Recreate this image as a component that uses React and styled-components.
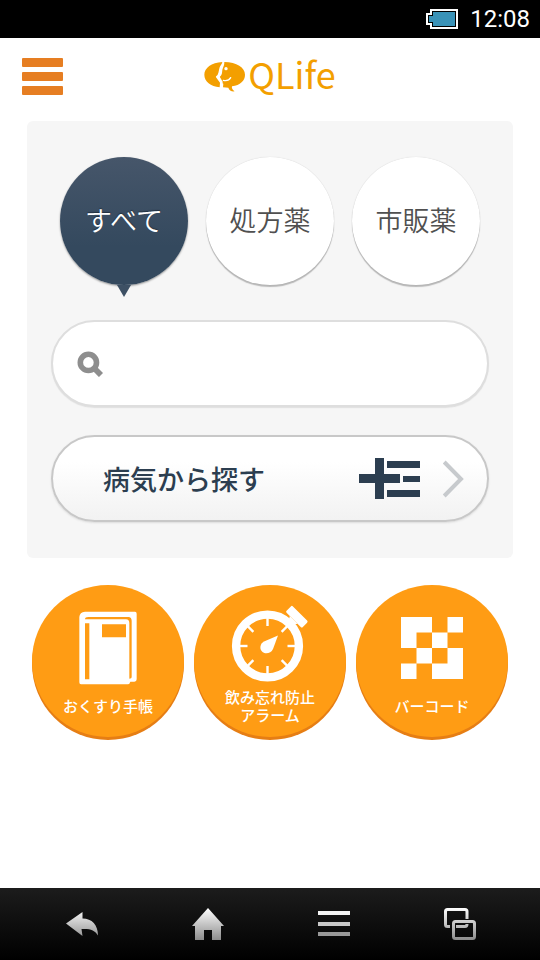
import { useState } from "react";
import styled, { createGlobalStyle } from "styled-components";

const GlobalStyle = createGlobalStyle`
  * {
    box-sizing: border-box;
  }
  body {
    margin: 0;
    background-color: #fff;
    font-family: "Noto Sans CJK JP", "Noto Sans", sans-serif;
  }
  button {
    padding: 0;
    border: 0;
    background: none;
    font-family: inherit;
    cursor: pointer;
  }
  svg {
    display: block;
    flex-shrink: 0;
  }
`;

const filters = ["すべて", "処方薬", "市販薬"];

export default function App() {
  const [filter, setFilter] = useState(filters[0]);
  const [keyword, setKeyword] = useState("");

  return (
    <Screen>
      <GlobalStyle />
      <StatusBar>
        <BatteryIcon />
        <time>12:08</time>
      </StatusBar>

      <Header>
        <MenuButton type="button" aria-label="メニュー">
          <MenuBar />
          <MenuBar />
          <MenuBar />
        </MenuButton>
        <Logo href="#">
          <LogoMark />
          <LogoText>QLife</LogoText>
        </Logo>
      </Header>

      <Main>
        <SearchPanel>
          <FilterRow>
            {filters.map((name) => (
              <FilterButton
                key={name}
                type="button"
                $active={name === filter}
                aria-pressed={name === filter}
                onClick={() => setFilter(name)}
              >
                {name}
              </FilterButton>
            ))}
          </FilterRow>
          <SearchBox>
            <SearchIcon />
            <SearchInput
              type="text"
              aria-label="薬を検索"
              value={keyword}
              onChange={(e) => setKeyword(e.target.value)}
            />
          </SearchBox>
          <DiseaseButton type="button">
            <DiseaseLabel>病気から探す</DiseaseLabel>
            <DiseaseIcon />
            <ChevronIcon />
          </DiseaseButton>
        </SearchPanel>

        <ToolRow>
          <ToolButton type="button">
            <ToolIcon>
              <NotebookIcon />
            </ToolIcon>
            <ToolLabel>おくすり手帳</ToolLabel>
          </ToolButton>
          <ToolButton type="button">
            <ToolIcon>
              <StopwatchIcon />
            </ToolIcon>
            <ToolLabel>
              飲み忘れ防止
              <br />
              アラーム
            </ToolLabel>
          </ToolButton>
          <ToolButton type="button">
            <ToolIcon>
              <BarcodeIcon />
            </ToolIcon>
            <ToolLabel>バーコード</ToolLabel>
          </ToolButton>
        </ToolRow>
      </Main>

      <SystemNav>
        <SystemButton type="button" aria-label="戻る">
          <BackIcon />
        </SystemButton>
        <SystemButton type="button" aria-label="ホーム">
          <HomeIcon />
        </SystemButton>
        <SystemButton type="button" aria-label="オプション">
          <OptionsIcon />
        </SystemButton>
        <SystemButton type="button" aria-label="最近使ったアプリ">
          <RecentsIcon />
        </SystemButton>
      </SystemNav>
    </Screen>
  );
}

function BatteryIcon() {
  return (
    <svg width="32" height="20" viewBox="0 0 32 20">
      <path d="M4 0H32V20H4V16H0V4H4Z" fill="#fff" />
      <path d="M6 2H30V18H6V14H2V6H6Z" fill="#000" />
      <path d="M7 3H29V17H7V13H3V7H7Z" fill="#3a93b8" />
    </svg>
  );
}

function LogoMark() {
  return (
    <svg width="42" height="31" viewBox="0 0 126 93">
      <path
        d="M55 3C22 5 1 21 1 41C1 61 20 76 47 79L48 65L36 49C34 46 39 44 41 41C45 34 44 27 47 19C49 13 54 9 55 3Z"
        fill="#f39f00"
      />
      <path
        d="M61 3C98 4 123 19 123 41C123 59 109 72 84 76C82 81 86 87 92 91C82 92 75 88 73 80L57 79L58 68C55 67 56 65 56 62L48 49C47 46 50 45 52 42C56 34 53 28 57 20C60 14 61 10 61 3Z"
        fill="#f39f00"
      />
      <circle cx="66" cy="23" r="5" fill="#fff" />
      <path
        d="M58 58C67 60 76 57 80 50"
        fill="none"
        stroke="#fff"
        strokeWidth="4"
        strokeLinecap="round"
      />
    </svg>
  );
}

function SearchIcon() {
  return (
    <svg width="26" height="26" viewBox="0 0 26 26" fill="none" stroke="#8e8e8e">
      <circle cx="11.4" cy="11.4" r="8.1" strokeWidth="5.6" />
      <path d="M16.500 16.500L24 24" strokeWidth="5.8" />
    </svg>
  );
}

function DiseaseIcon() {
  return (
    <svg width="62" height="42" viewBox="0 0 62 42" fill="#2c3e50">
      <path d="M16 0H25V16H41V25H25V41H16V25H0V16H16Z" />
      <path d="M28 3H61V10H28ZM44 18H61V24H44ZM28 32H61V39H28Z" />
    </svg>
  );
}

function ChevronIcon() {
  return (
    <svg width="22" height="38" viewBox="0 0 22 38">
      <path d="M1.200 2L18 19L1.200 36" fill="none" stroke="#c7cacd" strokeWidth="4" />
    </svg>
  );
}

function NotebookIcon() {
  return (
    <svg width="58" height="74" viewBox="0 0 174 222">
      <path
        d="M18 2H168Q173 2 173 8V205Q173 212 166 212H154Q152 220 146 220H6Q1 220 1 214V18Q2 3 18 2Z"
        fill="#fff"
      />
      <path
        d="M18 25Q18 18 28 18H148Q158 19 158 29V199Q158 203 151 203V36Q151 26 141 25Z"
        fill="#ff9c14"
      />
      <path d="M18 37H31V205H18ZM69 40H141V79H69Z" fill="#ff9c14" />
    </svg>
  );
}

function StopwatchIcon() {
  const ticks = [0, 45, 90, 135, 180, 225, 270, 315];
  return (
    <svg width="78" height="86" viewBox="0 0 78 86">
      <circle cx="36.5" cy="41" r="31.4" fill="none" stroke="#fff" strokeWidth="8.4" />
      {ticks.map((angle) => (
        <path
          key={angle}
          d="M36.500 13V21"
          stroke="#fff"
          strokeWidth="2.4"
          transform={`rotate(${angle} 36.500 41)`}
        />
      ))}
      <path
        d="M47 30.500L42 44C40 48.500 34.500 49.500 31.500 47C28 44 29 38.500 33 36.500Z"
        fill="#fff"
      />
      <g transform="rotate(45 36.5 41)">
        <path d="M31 4H42L40 7V10H33V7Z" fill="#fff" />
        <rect x="25" y="-5" width="23" height="9" rx="1.5" fill="#fff" />
      </g>
    </svg>
  );
}

function BarcodeIcon() {
  return (
    <svg width="62" height="62" viewBox="0 0 4 4" fill="#fff">
      <path d="M0 0H2V1H1V2H0ZM3 0H4V1H3ZM2 1H3V2H2ZM1 2H2V3H1ZM3 2H4V4H2V3H3ZM0 3H1V4H0Z" />
    </svg>
  );
}

function MetalGradient({ id }) {
  return (
    <linearGradient id={id} x1="0" y1="0" x2="0" y2="32" gradientUnits="userSpaceOnUse">
      <stop offset="0" stopColor="#fff" />
      <stop offset="1" stopColor="#8c8c8c" />
    </linearGradient>
  );
}

function BackIcon() {
  return (
    <svg width="32" height="32" viewBox="0 0 32 32">
      <MetalGradient id="metal-back" />
      <path
        d="M0 15.500L16.500 4V10.500C26 10.500 32 17 32 27.500C29 22 24 20.500 15.500 21L16.500 28Z"
        fill="url(#metal-back)"
      />
    </svg>
  );
}

function HomeIcon() {
  return (
    <svg width="32" height="32" viewBox="0 0 32 32">
      <MetalGradient id="metal-home" />
      <path
        d="M16 0L32 18H29V32H20V22H12V32H3V18H0Z"
        fill="url(#metal-home)"
      />
    </svg>
  );
}

function OptionsIcon() {
  return (
    <svg width="32" height="32" viewBox="0 0 32 32">
      <path d="M0 3H32V7H0Z" fill="#f4f4f4" />
      <path d="M0 14H32V18H0Z" fill="#c8c8c8" />
      <path d="M0 24H32V28H0Z" fill="#989898" />
    </svg>
  );
}

function RecentsIcon() {
  return (
    <svg width="32" height="32" viewBox="0 0 32 32" fill="none" strokeWidth="3">
      <MetalGradient id="metal-recents" />
      <path
        d="M6 18.500H3.500Q1.500 18.500 1.500 16.500V3.500Q1.500 1.500 3.500 1.500H21Q23 1.500 23 3.500V11M12 18.500H21Q23 18.500 23 16"
        stroke="url(#metal-recents)"
      />
      <rect x="9.500" y="13.500" width="21" height="17" rx="2" stroke="url(#metal-recents)" />
    </svg>
  );
}

const Screen = styled.div`
  display: flex;
  flex-direction: column;
  min-height: 100vh;
`;

const StatusBar = styled.div`
  display: flex;
  align-items: center;
  justify-content: flex-end;
  gap: 12px;
  height: 38px;
  padding: 0 10px;
  background-color: #000;
  color: #fff;
  font-family: Roboto, sans-serif;
  font-size: 24px;
  line-height: 38px;
`;

const Header = styled.header`
  display: grid;
  grid-template-columns: 1fr auto 1fr;
  align-items: center;
  height: 77px;
  padding: 0 22px;
`;

const MenuButton = styled.button`
  display: flex;
  flex-direction: column;
  gap: 5px;
  width: 41px;
`;

const MenuBar = styled.span`
  height: 9px;
  border-radius: 1px;
  background-color: #e67e22;
`;

const Logo = styled.a`
  display: flex;
  align-items: center;
  gap: 2px;
  color: #f39f00;
  text-decoration: none;
`;

const LogoText = styled.span`
  padding-bottom: 8px;
  font-size: 36px;
  line-height: 40px;
`;

const Main = styled.main`
  flex: 1;
  padding: 6px 27px 24px;
`;

const SearchPanel = styled.section`
  display: flex;
  flex-direction: column;
  padding: 36px 24px;
  border-radius: 6px;
  background-color: #f6f6f6;
`;

const FilterRow = styled.div`
  display: flex;
  justify-content: center;
  gap: 18px;
  margin-bottom: 35px;
`;

const FilterButton = styled.button`
  position: relative;
  width: 128px;
  height: 128px;
  padding-bottom: 2px;
  border-radius: 50%;
  background: ${({ $active }) =>
    $active ? "linear-gradient(#46566a, #34495e 70%)" : "#fff"};
  box-shadow: ${({ $active }) =>
    $active
      ? "0 1px 2px rgba(0, 0, 0, 0.4)"
      : "0 0 1px rgba(0, 0, 0, 0.2), 0 2px 1px rgba(0, 0, 0, 0.25)"};
  color: ${({ $active }) => ($active ? "#fff" : "#505050")};
  font-size: 27px;
  font-weight: 350;
  line-height: 40px;
  text-shadow: ${({ $active }) => ($active ? "0 -1px 1px #22303f" : "none")};

  &::after {
    content: "";
    display: ${({ $active }) => ($active ? "block" : "none")};
    position: absolute;
    top: 100%;
    left: 50%;
    border: 7px solid transparent;
    border-top: 12px solid #3d5064;
    border-bottom: 0;
    transform: translateX(-50%);
  }
`;

const SearchBox = styled.div`
  display: flex;
  align-items: center;
  gap: 12px;
  height: 87px;
  margin-bottom: 28px;
  padding: 0 24px;
  border: 2px solid #dedede;
  border-radius: 44px;
  background-color: #fff;
  box-shadow: 0 1px 1px #e0e0e0;
`;

const SearchInput = styled.input`
  flex: 1;
  min-width: 0;
  height: 48px;
  border: 0;
  outline: 0;
  background: none;
  color: #555;
  font-family: inherit;
  font-size: 27px;
`;

const DiseaseButton = styled.button`
  display: flex;
  align-items: center;
  gap: 22px;
  height: 87px;
  padding: 0 22px 0 50px;
  border: 2px solid #c8c8c8;
  border-radius: 44px;
  background: linear-gradient(#fff 30%, #f2f2f2);
  box-shadow: 0 1px 2px #dcdcdc;
`;

const DiseaseLabel = styled.span`
  flex: 1;
  color: #2c3e50;
  font-size: 27px;
  font-weight: 500;
  line-height: 40px;
  text-align: left;
`;

const ToolRow = styled.div`
  display: flex;
  justify-content: center;
  gap: 10px;
  margin-top: 27px;
`;

const ToolButton = styled.button`
  display: flex;
  flex-direction: column;
  align-items: center;
  width: 152px;
  height: 152px;
  padding-top: 22px;
  border-radius: 50%;
  background-color: #ff9c14;
  box-shadow: 0 3px 0 #e67e14;
  color: #fff;
`;

const ToolIcon = styled.span`
  display: flex;
  align-items: center;
  justify-content: center;
  height: 82px;
`;

const ToolLabel = styled.span`
  display: flex;
  flex-direction: column;
  justify-content: center;
  min-height: 36px;
  font-family: "Liberation Sans", "Noto Sans CJK JP", sans-serif;
  font-size: 15px;
  font-weight: 500;
  line-height: 18px;
`;

const SystemNav = styled.nav`
  display: grid;
  grid-template-columns: repeat(4, 1fr);
  height: 72px;
  padding: 0 17px 0 19px;
  background: linear-gradient(#1c1c1c, #000);
`;

const SystemButton = styled.button`
  display: flex;
  align-items: center;
  justify-content: center;
`;
